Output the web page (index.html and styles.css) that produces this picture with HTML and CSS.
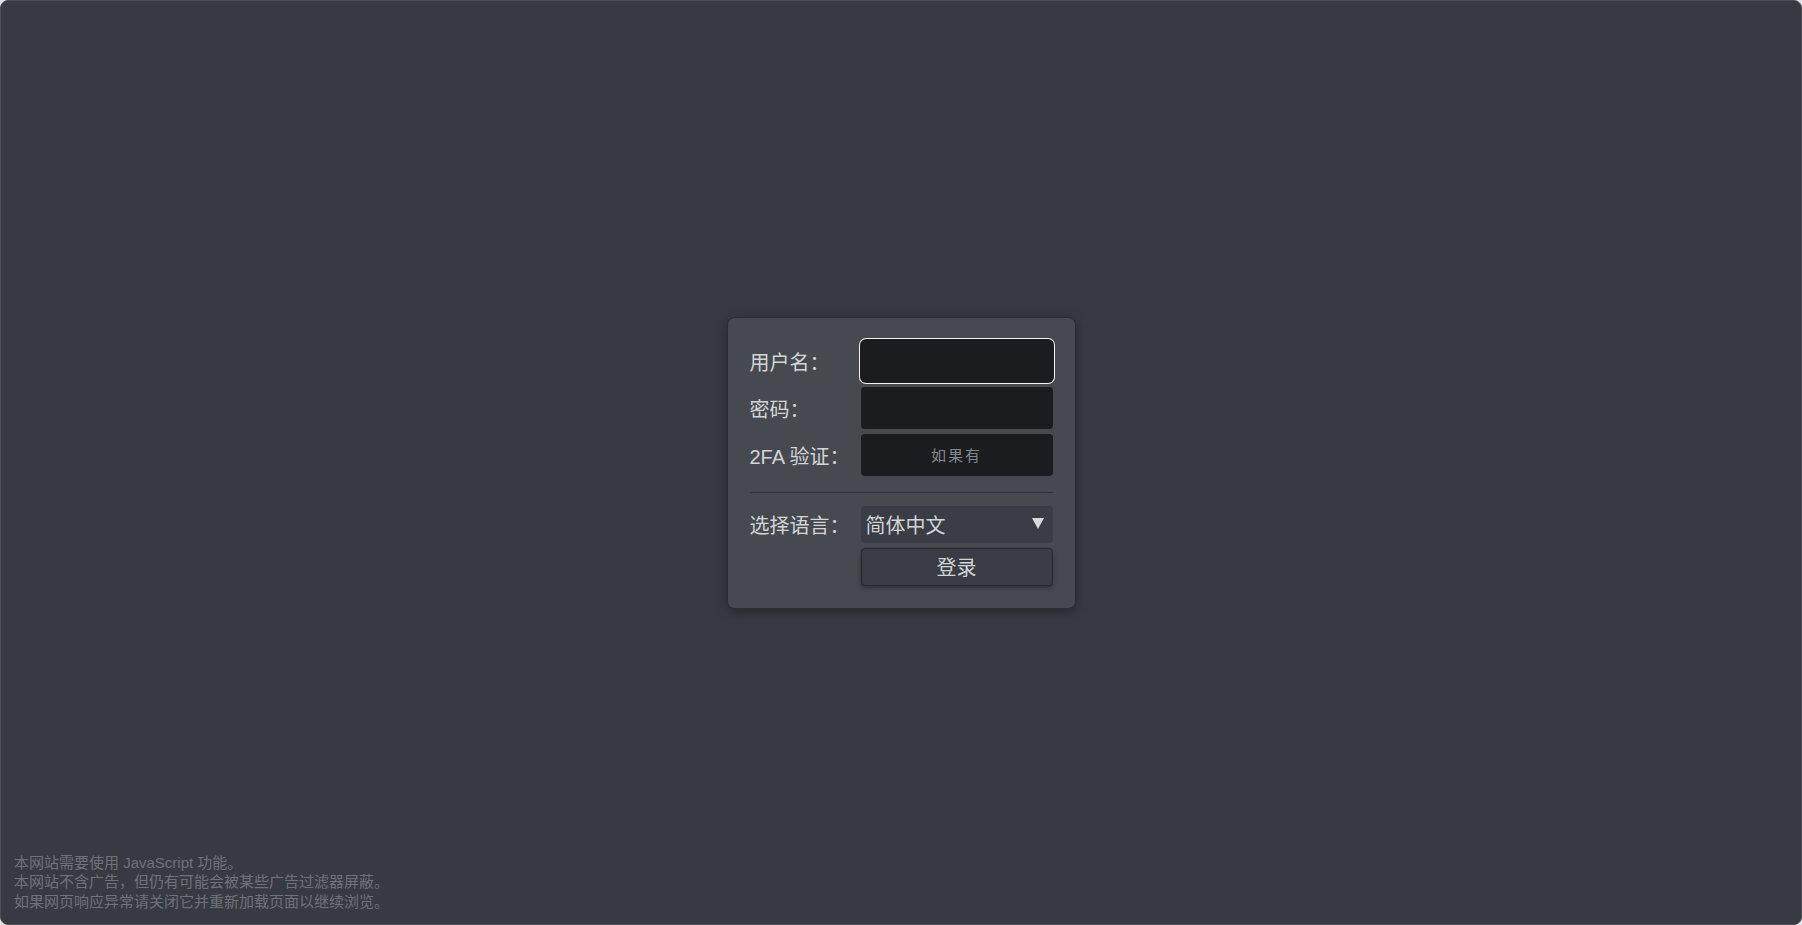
FILE: index.html
```html
<!DOCTYPE html>
<html lang="zh-CN">
<head>
  <meta charset="UTF-8" />
  <meta name="viewport" content="width=device-width, initial-scale=1.0"/>
  <title>登录</title>
  <link rel="stylesheet" href="styles.css">
</head>
<body>
  <div class="frame">
    <form class="login-box" onsubmit="return false;">
      <label class="field-label" for="username">用户名：</label>
      <input class="field" type="text" id="username" autofocus />

      <label class="field-label" for="password">密码：</label>
      <input class="field" type="password" id="password" />

      <label class="field-label" for="otp">2FA 验证：</label>
      <input class="field" type="text" id="otp" placeholder="如果有" />

      <hr class="divider" />

      <label class="field-label" for="lang">选择语言：</label>
      <div class="select-wrap">
        <select class="lang-select" id="lang">
          <option>简体中文</option>
          <option>English</option>
          <option>繁體中文</option>
        </select>
      </div>

      <button class="login-btn" type="submit">登录</button>
    </form>

    <div class="notice">
      本网站需要使用 JavaScript 功能。<br/>
      本网站不含广告，但仍有可能会被某些广告过滤器屏蔽。<br/>
      如果网页响应异常请关闭它并重新加载页面以继续浏览。
    </div>
  </div>
</body>
</html>
```

FILE: styles.css
```css
html {
  background: #e4e4e4;
}

body {
  margin: 0;
  font-family: 'Liberation Sans', 'Noto Sans CJK SC', sans-serif;
  color: #d3d4d6;
}

.frame {
  box-sizing: border-box;
  height: 100vh;
  background: #373a42;
  border: 1px solid #4a4d55;
  border-radius: 8px;
  display: grid;
  grid-template-rows: 1fr auto 1fr;
  justify-items: center;
}

.login-box {
  grid-row: 2;
  display: grid;
  grid-template-columns: 111px 192px;
  row-gap: 5px;
  align-items: center;
  padding: 22px;
  background: #464950;
  border: 1px solid #2b2d32;
  border-radius: 8px;
  box-shadow: 0 3px 12px rgba(0, 0, 0, 0.35);
}

.field-label {
  padding-top: 4px;
  font-size: 20px;
  line-height: 24px;
  color: #d3d4d6;
  white-space: nowrap;
}

.field {
  box-sizing: border-box;
  width: 192px;
  height: 42px;
  margin: 0;
  padding: 0 6px;
  border: none;
  border-radius: 4px;
  background: #1b1c20;
  color: #d3d4d6;
  font-family: 'Noto Sans CJK SC', sans-serif;
  font-size: 15px;
  text-align: center;
  outline: none;
  caret-color: #d3d4d6;
}

.field::placeholder {
  color: #85878c;
  letter-spacing: 2px;
}

.field:focus {
  box-shadow: 0 0 0 1px #1b1c20, 0 0 0 2px #f2f2f2;
  border-radius: 5px;
}

.divider {
  grid-column: 1 / span 2;
  width: 100%;
  margin: 11px 0 8px;
  border: none;
  border-top: 1px solid #303238;
}

.select-wrap {
  position: relative;
  height: 37px;
}

.select-wrap::after {
  content: '';
  position: absolute;
  right: 9px;
  top: 12px;
  border-left: 6px solid transparent;
  border-right: 6px solid transparent;
  border-top: 11px solid #d8d9db;
  pointer-events: none;
}

.lang-select {
  appearance: none;
  -webkit-appearance: none;
  box-sizing: border-box;
  width: 192px;
  height: 37px;
  margin: 0;
  padding: 0 5px;
  border: none;
  border-radius: 4px;
  background: #3a3d45;
  color: #d3d4d6;
  font-family: 'Noto Sans CJK SC', sans-serif;
  font-size: 20px;
  outline: none;
}

.login-btn {
  grid-column: 2;
  box-sizing: border-box;
  width: 192px;
  height: 38px;
  margin: 0;
  border: 1px solid #26282c;
  border-radius: 4px;
  background: #393c44;
  color: #d3d4d6;
  font-family: 'Noto Sans CJK SC', sans-serif;
  font-size: 20px;
  box-shadow: 0 2px 4px rgba(0, 0, 0, 0.35);
  cursor: pointer;
}

.login-btn:hover {
  background: #40434b;
}

.notice {
  grid-row: 3;
  justify-self: start;
  align-self: end;
  padding: 0 0 13px 13px;
  font-size: 15px;
  line-height: 19.5px;
  color: #6e7279;
}
```
